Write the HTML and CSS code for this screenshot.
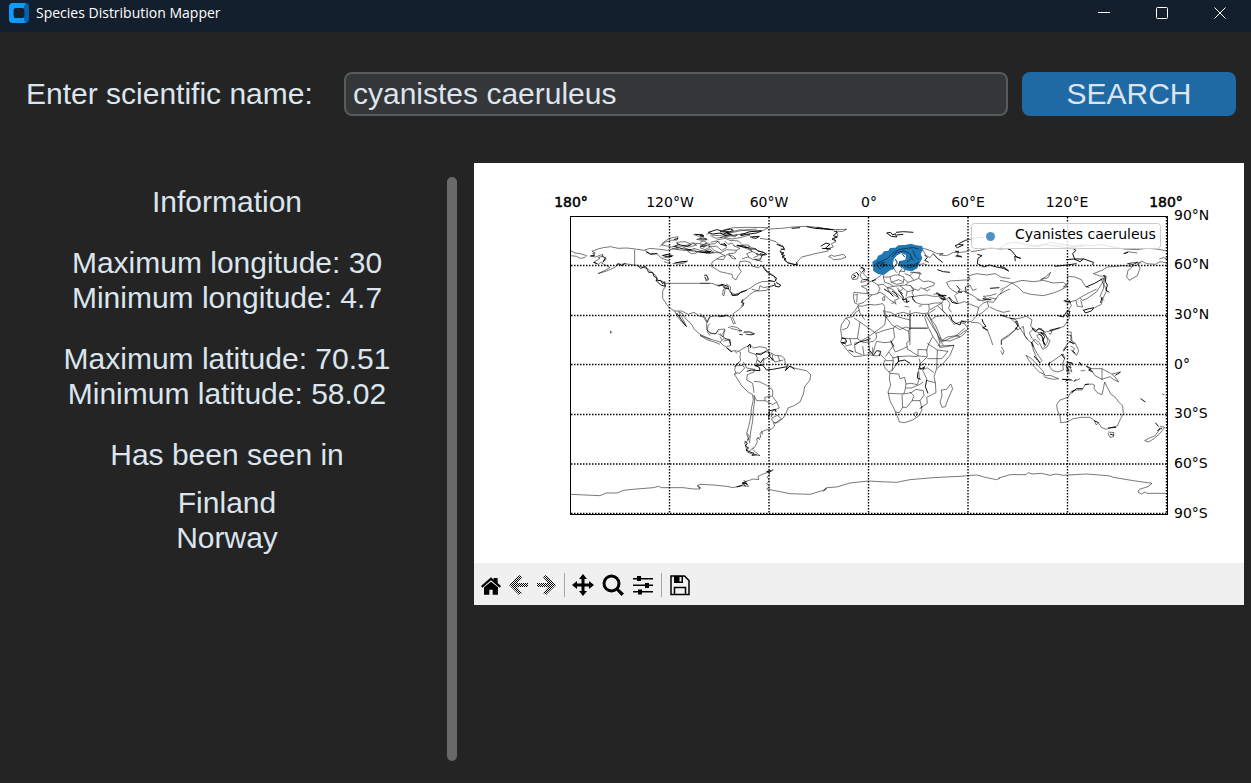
FILE: index.html
```html
<!DOCTYPE html>
<html lang="en">
<head>
  <meta charset="UTF-8" />
  <meta name="viewport" content="width=device-width, initial-scale=1.0" />
  <title>Species Distribution Mapper</title>
  <link rel="stylesheet" href="styles.css">
</head>
<body>
  <header class="titlebar">
    <svg class="app-icon" viewBox="0 0 60 60" aria-hidden="true">
      <rect width="60" height="60" rx="12" fill="#0062b1" />
      <path d="M12 0H50L45 10V50L50 60H12Q0 60 0 48V12Q0 0 12 0Z" fill="#0a9bfb" />
      <rect x="14" y="15" width="32" height="30" rx="6" fill="#141f2d" />
    </svg>
    <span class="app-title">Species Distribution Mapper</span>
    <div class="window-buttons">
      <button type="button" aria-label="Minimize"><svg viewBox="0 0 12 12"><path d="M0 5.5H12" /></svg></button>
      <button type="button" aria-label="Maximize"><svg viewBox="0 0 12 12"><rect x=".5" y=".5" width="11" height="11" rx="1" /></svg></button>
      <button type="button" aria-label="Close"><svg viewBox="0 0 12 12"><path d="M.5 .5L11.5 11.5M11.5 .5L.5 11.5" /></svg></button>
    </div>
  </header>

  <form class="search">
    <label for="species">Enter scientific name:</label>
    <input type="text" id="species" value="cyanistes caeruleus" spellcheck="false" autocomplete="off" />
    <button type="button">SEARCH</button>
  </form>

  <main class="content">
    <section class="info">
      <h2>Information</h2>
      <p>Maximum longitude: 30<br>Minimum longitude: 4.7</p>
      <p>Maximum latitude: 70.51<br>Minimum latitude: 58.02</p>
      <h2>Has been seen in</h2>
      <ul>
        <li>Finland</li>
        <li>Norway</li>
      </ul>
    </section>
    <div class="scrollbar"></div>

    <section class="figure">
      <svg class="map" viewBox="474 163 770 400" role="img" aria-label="Distribution map">
        <!-- coastlines and borders, one group per region -->
        <g class="land">
          <!-- Alaska and western Canada -->
          <g transform="translate(550 185) scale(.33333)">
            <path d="M62 197L75 204 90 206 110 212 104 218 90 220 80 214 62 212" />
            <path d="M121 213L135 210 128 206 136 204 126 199 144 192 160 188 181 185 205 190 230 189 256 192 282 196 300 190 330 193 352 196 370 192 400 196 480 202" />
            <path d="M121 213L136 216 158 208 159 214 145 217 150 220 130 232 145 238 152 232 165 240 180 247 165 256 144 266 170 258 195 247 200 240 225 236 250 240 262 241 280 247 295 252 305 262 318 272 322 285 340 290 346 305 338 318 338 340 350 358 358 368 374 378 382 394 396 412 410 425 400 405 386 380 398 386 406 400 425 418 432 432 450 448 480 462" />
            <path d="M168 215L158 232 170 222M254 194V240M346 295H480M374 378L395 378 415 388 432 382 450 394 465 396 472 412 480 395M480 415L474 422 472 440 480 452" />
            <path d="M285 196L300 206 320 205 332 218 358 228 360 236 342 230M335 212L355 208 370 212 355 218 340 216M368 236L390 232 413 228 400 235 380 238" />
            <path d="M330 185L340 172 358 160 384 155 382 165 362 166 345 172 336 180 365 186 385 180 380 172 405 170 425 178 400 182 418 186 440 180 425 174 450 176 480 184M365 190L385 192 375 182 395 184 420 196 432 190 450 196 480 200M420 204L412 197 434 195 440 204 425 206Z" />
            <path d="M430 150L450 148 462 152 445 154 432 147M440 163L460 158 472 164 455 166ZM465 176L480 178M470 148L480 144M463 272L470 270 475 282 470 284 463 276" />
            <path class="dense" d="M200 238L208 236 214 242 226 235M262 241L272 250 286 244 292 254 296 262 308 262 312 274 322 280 318 288 332 286 338 296 344 290 346 304 332 300 322 290M288 200L302 208 322 206M380 384L394 404 408 424" />
            <path class="dense" d="M338 212L352 208 366 214 344 214M374 234L396 230 410 230M372 164L384 160M370 184L386 188 400 192 424 194M436 148L458 150M448 162L470 162M122 213L134 212M156 212L166 220 160 230M132 232L142 236M440 200L470 204 480 202M380 176L392 180 410 184 422 180" />
            <path d="M181 438L185 441 182 445Z" />
          </g>
          <!-- Eastern Canada, Greenland, Caribbean -->
          <g transform="translate(700 185) scale(.33333)">
            <path class="dense" d="M25 142L50 134 66 138 92 132 100 136 80 144 94 148 75 152 62 144 38 147 25 142M120 150L150 140 185 138 170 144 140 148 122 152M150 156L178 154 168 160 155 158M110 182L130 182 150 192 168 192 172 197 190 202 200 208" />
            <path d="M50 165L75 160 90 166 115 168 128 180 144 180 155 188 168 192 172 197 190 202 200 208 184 212 170 206 150 196 130 186 110 182" />
            <path d="M70 135L100 128 150 127 205 128 190 136 150 138 120 134 90 142M60 158L85 150 105 156 112 148 75 156M0 149L10 152 0 158M0 172L12 168 22 174 8 180 0 188 15 194 30 186 25 178 45 176 52 170 62 178 72 176 80 188 65 196 50 184 30 184 42 196 60 204 80 194 110 196 120 190 100 182M14 200L28 192 42 202 20 204Z" />
            <path d="M30 150L58 152 84 146 104 152 126 146 150 150 120 158 96 162 70 156 48 160 34 154M60 146L82 142 100 142 118 138 140 134 170 132M0 180L20 182 10 188M32 172L48 168 60 172M74 168L84 178 96 174 104 184" />
            <path class="dense" d="M60 140L86 140 70 148M62 178L80 182 72 174M0 152L12 154M0 184L14 184M16 198L34 200M112 180L134 188 150 186M180 206L196 210" />
            <path d="M0 200L30 205 55 202 75 212 60 216 50 222 70 224 80 208 100 214 108 222 95 220 86 206 105 204 110 196M50 222L36 232 34 244 48 252 60 260 82 265 96 268 98 278 108 285 114 272 124 260 116 248 120 230 136 228 150 232 158 244 176 248 186 240 196 252 205 262 215 268 224 276 228 288" />
            <path d="M126 222L146 215 140 206 156 200 150 188M160 218L175 212 168 206 186 210 182 224 170 228 164 222 186 230M144 216L160 224 180 222 190 208" />
            <path class="dense" d="M188 244L198 258 206 264 214 270 220 272 230 280 224 290 206 286M228 292L242 300 238 306 226 304 224 294" />
            <path d="M0 295H35L50 300 70 302 84 310 92 322 104 328 125 322 150 310 170 296 186 290 215 288M50 302L66 300 76 310 72 332 68 330 70 312M78 296L92 306 90 320M92 330L112 328 130 318M155 312L175 318 200 316 206 308 224 300 206 305 190 308 180 302 176 316 162 320 150 328 140 338 128 346" />
            <path class="dense" d="M56 304L66 298 84 304 86 312 70 308M92 320L98 332 114 330 122 322 140 316M128 344L124 352 132 356 124 364M55 392L66 394 80 390" />
            <path d="M128 344L130 362 116 374 100 386 98 398 106 415 100 416 92 396 80 392 60 395 46 392 28 396 20 414 20 434 32 446 48 446 54 434 74 432 70 456 88 468 92 480M0 385L12 398 20 412M0 450L20 464 40 470 60 478M54 446L70 456 60 446M84 428L96 424 112 428 126 438 108 434 92 430M118 448L128 448M132 440L148 440 164 446 154 450 136 447M12 270L20 272 26 284 18 288 16 276" />
            <path d="M208 132L245 130 280 126 320 124 360 128 390 134 440 133 426 140 408 138 414 152 402 160 408 170 394 176 400 186 380 192 385 198 364 202 345 206 330 210 305 216 294 228 286 240 274 236 262 232 256 224 246 208 240 198 252 190 248 182 236 178 228 170 208 164 180 160" />
            <path class="dense" d="M275 130L300 128M320 125L345 130 400 134 350 128M402 138L412 142 400 152 412 156 396 162 408 168M362 184L378 174 390 178 376 190 392 192 366 190M240 200L252 204 244 208 254 212 246 216 258 222 252 224 264 234 292 240 290 232M230 178L250 186 254 194 242 192" />
            <path d="M386 215L394 210 402 214 430 208 438 216 424 222 400 224 394 218 386 215" />
          </g>
          <!-- Europe, Middle East and western Asia -->
          <g transform="translate(850 185) scale(.33333)">
            <path class="dense" d="M110 144L122 142 128 150 136 146 140 156 124 154 110 144M138 142L160 140 190 142M140 150L160 148M315 182L326 178 340 180 322 188ZM326 176L346 166 356 164" />
            <path d="M356 164L378 158 400 157M30 252L38 248 44 258 40 266 50 276 56 284 44 290 32 292 38 282 30 274 34 264 28 256M8 268L20 262 26 270 22 282 8 284 4 276ZM34 304L52 300 54 292 66 288 80 280 92 272 96 262 102 266 100 276 120 276 134 270 146 270 150 258 164 260 162 250 180 250" />
            <path class="dense" d="M32 246L44 252 36 262M8 280L18 274 10 270M20 262L26 270M40 284L54 284M66 288L78 284M102 312L118 322 130 334M144 316L158 326M92 262L98 270" />
            <path d="M34 304L50 312 52 326 30 324 12 322 10 334 14 354 24 358 42 352 54 340 66 330 82 326 90 322 104 330 118 344 132 352 138 358 134 346 148 340 128 326 116 318 112 308 126 312 144 328 156 338 162 350 172 352 166 340 176 336 192 334 186 324 192 312" />
            <path d="M98 338L104 334 104 346 98 346ZM124 356L134 352M164 364L178 366M206 364L216 362M14 330L22 328 20 352M52 326L66 330M66 288L84 300 90 312 82 326M84 300L100 298 112 308M100 276L104 292 118 296 130 304 112 308M120 276L124 292 140 298 160 294 162 276 146 270M124 292L146 284 158 290M130 304L150 302 160 310 152 318 140 308M150 302L168 300 174 292 162 282M160 310L172 320 168 334M168 300L182 302 190 316 172 320M174 292L192 286 180 272 164 266M192 286L206 280 210 266 190 262 180 272M180 262L210 262 214 270M206 280L220 290 236 288 254 294 250 302 236 306 222 312 212 308 206 316 192 312 182 302M222 312L232 318 240 312" />
            <path d="M186 336L206 332 230 330 250 334 270 334 282 342 276 354 254 354 236 358 214 358 196 352 188 342M250 328L262 326 280 334 290 342M260 322L274 330 290 332M236 358L238 372 234 384 220 386 196 382 180 388 160 382 142 386 136 390 122 382 104 380 104 364 98 356 76 360 56 358 36 364 24 362 16 376 0 392" />
            <path class="dense" d="M150 322L160 336 158 344 170 342 170 352 178 348M126 318L138 326 144 336M186 334L190 344 196 350M258 324L272 332 288 332M268 338L286 344" />
            <path d="M180 388V480M180 430H232M104 380L108 396 126 420 150 434 166 426 180 430M108 396L104 420 60 452 30 470M24 362L30 384 44 404M232 386L240 400 252 426 262 446 272 470 280 480M234 384L244 404 256 420 268 448 276 466 300 468 330 456 344 446 354 430 344 416 328 412 312 418 302 404 292 390 278 378 276 356M240 374L262 362 276 354M238 384L256 372M262 362L286 384M244 404L258 394 280 392M290 342L300 356 296 370 304 382M276 466L292 456 318 452 330 456M318 452L344 430" />
            <path class="dense" d="M302 392L306 406 316 414 330 420 334 408 348 412M264 330L282 336 286 344 274 342" />
            <path d="M292 342L298 336 310 350 324 356 320 344 314 332 322 324 308 316 296 306 290 292 300 288 330 286 360 284 356 272 380 266 410 270 436 266 456 278 480 280M322 324L340 318 350 322 346 306 360 300 368 316 380 312M324 356L344 350 366 360 386 368 400 354 412 350 430 352 446 330 466 318 480 312M346 306V322L366 330 390 346M386 368L380 392 364 410 334 408M412 350L416 366 396 384 380 392M364 412L388 414 402 428 414 440 424 466 428 480M380 344L400 348 420 338 440 342M420 366L440 376 460 382 480 378M396 346L410 340 400 334 420 332 440 326" />
            <path class="dense" d="M396 402L400 414 408 424 398 428 414 436M320 302L330 314 324 320 336 322M398 340L410 344 424 344M420 310L448 308M296 336L306 352 322 356" />
            <path d="M204 192L220 190 240 196 262 206 280 206 268 210 290 212 310 202 330 202 350 200 356 192 364 200 390 196 420 188 450 192 480 190M220 196L226 210 240 218 250 206M316 200L326 198 322 212 336 216 316 214" />
            <path class="dense" d="M224 210L232 218 224 226 236 232M250 206L262 220 278 232M262 254L280 260 300 262M382 208L396 212 384 220 382 236 402 246 418 240 440 246 460 250 476 258M316 198L326 202M318 212L334 214" />
            <path d="M150 240L156 250 150 260M128 244L136 258 142 264M204 240L220 236 232 240" />
          </g>
          <!-- East Asia and Siberia -->
          <g transform="translate(1000 185) scale(.33333)">
            <path d="M0 190L20 176 45 172 70 176 90 182 120 184 150 172 180 178 220 184 240 180 280 182 300 178 330 184 352 188 372 192 410 194 440 190 470 192 502 198M100 184L130 178 200 188 250 184M370 206L384 200 412 204M478 222L490 218 502 222M502 234L480 230 466 238 440 236 424 228 412 240 394 244 370 242 346 244 322 246 306 256 280 266 304 274 314 272 308 292 290 320 262 340 248 346 240 340" />
            <path class="dense" d="M20 190L34 196 50 216 62 220 44 214 46 228M218 190L228 196 218 206 224 222 252 222 280 232 278 240M198 224L222 222 240 230 250 222M164 244L200 240 230 236M372 206L384 202M258 306L282 296 310 280M310 272L318 274 316 290 322 300 318 316 328 322M250 376L264 372 282 368 274 378 256 384 250 374M175 392L190 396 200 380 210 378 206 392M0 244L14 248 26 258" />
            <path d="M412 230L420 250 412 272 388 286 380 276 384 256 398 244M384 236L400 232 424 234M122 284L136 276 152 262 144 278ZM0 286L20 290 36 294 66 286 100 290 130 286 160 294 190 292 202 302 190 306 204 294 202 274 224 276 244 284 256 304 268 308M36 294L54 306 70 322 92 328 130 332 160 324 176 318 202 304M0 328L12 310 36 294M0 316L10 308" />
            <path d="M302 280L320 316 308 342 304 358 284 368M314 276L310 312 300 334 312 346M190 348L204 344 212 350 228 346 232 364 248 366 242 346M228 346L240 338 258 328 290 312M208 346L214 362 202 380 208 400 192 424 160 436 140 440 124 450 134 480M192 346L212 352 200 356" />
            <path d="M0 390L24 398 46 402 66 398 78 394 96 404 92 424 100 432 88 444 96 460 110 476 116 480M46 402L60 432 70 424 74 452 82 462M4 480V464L26 450 50 430M30 398L44 412 52 408 56 424M96 428L110 436 124 430 132 442 110 452 120 466M148 436L156 438 152 448 146 444M202 440L214 442 212 464 226 476" />
            <path class="dense" d="M46 410L54 424 46 430 56 434M96 430L106 440 116 430 134 440M116 446L128 456 132 478M0 390L20 394M30 400L44 402M382 236L400 238 412 232M194 350L210 350M150 436L180 428M306 336L302 354" />
          </g>
          <!-- South and Central America -->
          <g transform="translate(700 330) scale(.33333)">
            <path d="M0 17L20 24 40 30 60 36 70 46 80 52 92 64 104 62 116 64 122 68 120 80 122 92 108 104 104 118 108 132 102 132 112 146 124 166 144 186 158 194 160 210 154 236 152 262 146 290 140 310 146 330 134 338 138 352 142 366 160 374 180 377 166 366 158 358 166 348 172 336 170 326 182 322 180 310 196 300 214 298 224 288 220 278 232 278 250 264 258 250 264 234 280 228 300 216 310 192 314 170 330 150 332 134 320 122 290 116 270 110 256 104 254 86 244 78 226 76 206 66 198 54 180 50 160 54 150 44 140 50 128 56 116 64" />
            <path d="M60 36L72 26 88 28 92 46 80 50M66 30L60 20M92 46L90 28 70 34M22 0L30 8 46 12 56 2M76 0L66 14M110 108L128 106 134 114 120 130 108 128M130 96L140 114 164 118 162 126 142 134 140 150 158 160 162 188M162 154L180 156 200 166 218 180 218 198 194 202 196 212 170 212 162 196M146 46L146 66 168 74 172 84 168 102 188 104 192 88 204 82 216 70M168 74L196 66 206 66M218 84L224 96 250 90M234 78L240 94M218 74L216 92M196 212L218 224 230 216 218 200M230 216L238 234 216 244 214 262M216 264L232 256 244 266 226 280 216 272ZM162 196L164 212 160 240 158 272 152 306 148 340M146 366L160 352" />
            <path class="dense" d="M142 50L150 42 152 54M168 70L182 74 200 62M172 90L182 98 192 84M104 110L116 98M140 124L154 120 180 122 178 112 164 106 188 106 200 120 218 118 240 114 262 110 256 122 270 108 284 118M134 334L142 340 136 348 146 354 138 360 150 366 162 370 156 376 170 374M210 242L226 238 228 246M80 54L96 66M206 66L210 80 220 92M208 240L206 268" />
            <path d="M116 4L124 2M118 13L128 15M130 8L148 6 162 13 140 14M142 310L148 320 142 330M184 302L188 314M172 322L180 330M104 64L112 70" />
          </g>
          <!-- Africa -->
          <g transform="translate(830 310) scale(.33333)">
            <path d="M88 0L76 8 68 20 48 24 34 44 32 60 36 84 32 96 46 114 58 128 72 140 94 138 116 134 140 138 152 134 166 148 160 162 166 176 180 188 178 206 182 226 174 246 180 272 194 300 204 324 208 336 224 338 248 330 266 318 276 300 274 292 292 280 290 262 318 248 316 218 312 200 320 176 340 160 360 136 372 106 350 110 330 112 322 98 308 78 294 50 284 22 288 12" />
            <path d="M160 0L166 22 186 16 240 30M240 0V54H294M240 54L236 64 238 92 230 98 232 118 244 124 264 138 290 140M236 64L200 46 190 54 160 62 138 70 140 84 130 94 118 96 100 98 88 90 82 86 90 36 72 24M90 36L138 70M48 24L60 36 52 54 36 60M36 84L60 86 82 86M190 54L194 82 184 96 162 98 140 94 136 104 130 128M184 96L188 110 176 126 166 140M188 110L196 126 220 116 232 110M176 126L190 144 204 140 236 138 262 140M166 152L190 152 188 142M190 152L186 182 176 186M186 182L206 152 204 140M166 164H178M180 190L206 192 210 206 224 202 228 222 224 246 220 252 174 250M228 222L244 220 262 224 268 206 266 180 272 160 292 140 290 120 296 102 308 80M264 138L264 118 292 120M292 100L322 120 354 124 336 146 292 146M322 120L320 176M290 172L312 188M228 234L244 234 268 224 280 216M280 184L292 212 316 218M220 252L244 248 258 238 280 242 282 256 270 272 246 272 230 292 218 292 216 254M218 292L208 308 196 306M246 272L252 258 240 246M270 272L276 294M250 312L260 306 264 312 256 320ZM74 108L76 126 96 134M98 108L102 136M116 96L120 132M128 112L128 132M60 86L64 104 46 108M72 100L88 96" />
            <path class="dense" d="M34 84L46 86 50 96 34 98 48 102M56 120L70 126M120 122L130 136 140 122 152 124 148 138M72 106L88 96 104 92 122 86M182 92L192 110M204 138L206 154 196 166M204 154L224 150 240 160M268 168L272 178 284 170 278 182M264 186L262 204 272 208M290 210L286 230 294 250M276 290L270 296" />
            <path d="M362 222L368 236 356 262 346 290 336 292 330 276 336 258 334 240 350 238 362 222M264 176H290M268 146L272 166 286 160M290 20L304 44 322 72 330 100 326 108 372 106M328 80L336 96 362 84 390 74 408 60" />
          </g>
          <!-- South-east Asia and Oceania -->
          <g transform="translate(1000 310) scale(.33333)">
            <path d="M4 104V92L26 78 50 56M4 110L12 124 8 134 2 122M60 54L74 76 82 88 94 98 100 120 110 144 120 158 126 152 116 138 104 118 96 96 106 88 118 98 128 118 142 110 150 92 136 76 122 66M96 54L110 66 136 72 144 92 132 112M78 136L92 144 108 160 128 182 134 194 118 186 104 172 86 150 78 136M130 198L150 196 176 206 160 208 134 202M146 160L160 152 180 138 190 132 194 146 188 160 190 180 174 186 158 182 150 172Z" />
            <path d="M202 160L216 158 210 170 216 186 204 176 208 192 200 184 202 160M188 208L210 208 218 212M222 214L240 206M204 76L214 76 216 92 208 96 226 100 236 122 230 136 218 126 224 116 212 108M206 96L190 120M240 158L244 168M242 182L256 182M260 170L276 182 284 196 306 208 330 200 340 208 356 216 344 200 334 192 346 190 360 186M276 176L306 176 332 190M306 176V210" />
            <path class="dense" d="M102 138L112 150M190 124L200 110M200 156L218 160M204 170L214 172M186 208L214 210M222 214L228 208M238 156L244 166M258 168L274 176 266 180 278 186M346 196L362 186M122 66L134 80 128 92 136 106M184 132L194 146M216 246L230 236 248 236M324 354L348 352M282 332L296 338M466 338L476 350M422 266L436 276M472 362L486 354" />
            <path class="dense" d="M208 94L222 102M214 120L226 130M94 96L100 110M112 148L120 160M150 156L146 166M198 166L206 182M214 250L224 240M196 214L206 208M254 224L266 222M330 372L342 376" />
            <path d="M314 216L324 236 332 252 346 262 356 276 368 288 370 310 360 330 352 348 336 352 318 358 304 352 296 340 288 344 284 332 270 322 244 322 220 326 200 336 182 338 180 318 172 300 170 284 180 270 204 262 214 244 230 240 246 240 256 224 276 222 284 226 282 236 292 248 306 254 310 236 314 216M324 366L342 368 340 380 330 382 324 370M480 348L494 352 480 370 462 386 446 396 434 392 448 384 464 378 474 366 480 352M486 252L494 254" />
          </g>
          <!-- Antarctica -->
          <g transform="translate(560 455) scale(.33333)">
            <path d="M32 118L120 122 138 114 172 114 190 106 230 102 280 98 296 94 304 98 370 98 400 102 420 102 412 92 420 88 460 90 500 94 520 98 548 90 556 80 580 72 596 74 594 64 612 56 640 46M544 92L566 94 556 84 546 86 560 78M640 44L620 50 630 56 622 66 628 78 620 86 628 94 620 102 640 106 690 116 750 118 790 106 800 98 830 96 870 84 925 78 960 80 1010 82 1050 74 1120 68 1200 64 1250 60 1280 68 1310 74 1320 70" />
            <path class="dense" d="M414 92L422 100M530 96L546 92M552 76L562 88 548 82 556 94M620 50L634 48M790 108L800 100" />
          </g>
          <g transform="translate(1000 310) scale(.33333)">
            <path d="M-4 504L30 494 78 494 84 488 96 492 124 490 150 496 168 492 190 496 260 492 310 496 330 498 340 502 400 512 456 520 444 530 418 538 414 546 424 552 436 546 440 550H502" />
          </g>
        </g>

        <!-- observations -->
        <g transform="translate(850 185) scale(.33333)">
          <path class="points" d="M68 240L67 230 80 222 84 212 95 208 102 199 115 197 120 189 136 188 145 181 165 180 182 176 198 181 216 183 220 194 212 206 217 220 208 236 202 250 186 259 166 256 158 248 146 242 150 228 166 224 168 210 154 204 140 212 132 222 128 238 132 250 118 257 105 268 85 268 70 258Z" />
          <path class="points-land" d="M92 252L82 244 80 234 96 228 110 222 126 206 146 194 170 190 190 188 206 192M84 236L104 232 92 240 110 238 96 248M126 216L140 202 164 198 180 206 186 220 170 232M188 196L196 214 206 224M160 240L176 248 196 244 206 232 190 240 174 240M180 216L192 226" />
          <path class="points-land" d="M136 222L142 234 134 244 126 254M150 228L146 240M156 206L164 216" />
        </g>

        <g class="grid">
          <path d="M669.5 217V514M769 217V514M868.5 217V514M968 217V514M1067.5 217V514M1166.5 217V514" />
          <path d="M571 265.5H1167M571 315.5H1167M571 364.5H1167M571 414.5H1167M571 464H1167M571 513.5H1167" />
        </g>
        <rect class="frame" x="570.5" y="216.5" width="597" height="298" />

        <g class="ticks ticks-top">
          <text class="strong" x="571" y="207">180°</text>
          <text x="670" y="207">120°W</text>
          <text x="769" y="207">60°W</text>
          <text x="869" y="207">0°</text>
          <text x="968" y="207">60°E</text>
          <text x="1067" y="207">120°E</text>
          <text class="strong" x="1166" y="207">180°</text>
        </g>
        <g class="ticks">
          <text x="1174" y="220">90°N</text>
          <text x="1174" y="269">60°N</text>
          <text x="1174" y="319">30°N</text>
          <text x="1174" y="369">0°</text>
          <text x="1174" y="418">30°S</text>
          <text x="1174" y="468">60°S</text>
          <text x="1174" y="518">90°S</text>
        </g>

        <rect class="legend" x="971.5" y="223.5" width="189" height="25" rx="3" />
        <circle class="legend-dot" cx="990.5" cy="236.5" r="4.5" />
        <text class="ticks" x="1015" y="239">Cyanistes caeruleus</text>
      </svg>

      <div class="toolbar">
        <button type="button" class="nav" aria-label="Home">
          <svg viewBox="24 53 72 72"><path d="M30 92L60 66 68 73V68H80V83L90 92 86 97 60 75 34 97Z" /><path d="M39 96L60 79 81 96V118H65V103H55V118H39Z" /></svg>
        </button>
        <button type="button" class="nav" aria-label="Back">
          <svg viewBox="0 0 24 24">
            <defs><pattern id="dither" width="2" height="2" patternUnits="userSpaceOnUse"><path d="M0 0H1V1H0ZM1 1H2V2H1Z" shape-rendering="crispEdges" /></pattern></defs>
            <path fill="url(#dither)" d="M2 12L12 2 15 4 10 10H21V14H10L15 20 12 22Z" />
          </svg>
        </button>
        <button type="button" class="nav" aria-label="Forward">
          <svg viewBox="0 0 24 24"><path fill="url(#dither)" d="M21 12L11 2 8 4 13 10H2V14H13L8 20 11 22Z" /></svg>
        </button>
        <span class="separator"></span>
        <button type="button" aria-label="Pan">
          <svg viewBox="0 0 24 24"><path d="M12 1L16 6H13.500V10.500H18V8L23 12 18 16V13.500H13.500V18H16L12 23 8 18H10.500V13.500H6V16L1 12 6 8V10.500H10.500V6H8Z" /></svg>
        </button>
        <button type="button" aria-label="Zoom">
          <svg viewBox="0 0 24 24"><circle cx="10.500" cy="10.500" r="7.500" fill="none" stroke="#000" stroke-width="3" /><path d="M15 17L17 15 23 20.500 20.500 23Z" /></svg>
        </button>
        <button type="button" aria-label="Configure subplots">
          <svg viewBox="0 0 24 24"><path d="M2 5H22V6.500H2ZM2 11.500H22V13H2ZM2 18H22V19.500H2ZM6 3H10V8H6ZM14 10H18V15H14ZM7 16.500H11V21.500H7Z" /></svg>
        </button>
        <span class="separator"></span>
        <button type="button" aria-label="Save">
          <svg viewBox="0 0 24 24"><path d="M3 3H16.500L21 7.500V21.500H3ZM6.500 21V14.500H17.500V21" fill="none" stroke="#000" stroke-width="1.500" /><path d="M6 3H15V10H6ZM11.500 4V8.500H13.500V4Z" fill-rule="evenodd" /></svg>
        </button>
      </div>
    </section>
  </main>
</body>
</html>
```
FILE: styles.css
```css
* { margin: 0; padding: 0; box-sizing: border-box; }
body {
  display: flex;
  flex-direction: column;
  min-height: 100vh;
  background: #242424;
  color: #dce4ee;
  font-family: "Liberation Sans", Arial, sans-serif;
  font-size: 30px;
  line-height: 35px;
}
button { border: none; background: none; color: inherit; font: inherit; }

.titlebar {
  display: flex;
  align-items: center;
  height: 32px;
  padding: 0 2px 6px 9px;
  background: #141f2d;
  color: #fff;
}
.app-icon { width: 20px; height: 20px; }
.app-title {
  margin-left: 7px;
  font-family: "Open Sans", "Segoe UI", sans-serif;
  font-size: 14px;
  line-height: 20px;
}
.window-buttons { display: flex; margin-left: auto; }
.window-buttons button {
  display: flex;
  align-items: center;
  justify-content: center;
  width: 58px;
  height: 26px;
}
.window-buttons svg { width: 12px; height: 12px; fill: none; stroke: #fff; }

.search {
  display: flex;
  align-items: center;
  padding: 40px 15px 0 26px;
}
.search label { width: 318px; padding-bottom: 2px; }
.search input {
  flex: 1;
  min-width: 0;
  height: 44px;
  padding: 0 7px;
  border: 2px solid #565b5e;
  border-radius: 8px;
  background: #343638;
  color: #dce4ee;
  font: inherit;
  outline: none;
}
.search button {
  width: 214px;
  height: 44px;
  margin-left: 14px;
  padding-bottom: 2px;
  border-radius: 8px;
  background: #1f6aa5;
}

.content {
  display: flex;
  flex: 1;
  align-items: flex-start;
  padding: 47px 7px 22px;
}
.info {
  display: flex;
  flex-direction: column;
  gap: 26px;
  width: 440px;
  padding-top: 21px;
  text-align: center;
}
.info h2 { font-size: 30px; font-weight: normal; }
.info ul { margin-top: -13px; list-style: none; }
.scrollbar {
  align-self: stretch;
  width: 10px;
  margin: 14px 17px 0 0;
  border-radius: 5px;
  background: #696969;
}

.figure { flex: 1; background: #fff; }
.map { display: block; width: 100%; }
.land path { fill: none; stroke: #000; stroke-width: 1.6; }
.land .dense { stroke-width: 2.8; }
.points { fill: #1f77b4; }
.points-land { fill: none; stroke: #0c3c5e; stroke-width: 3; }
.grid path { fill: none; stroke: #000; stroke-width: 1.4; stroke-dasharray: 1.5 1.5; }
.frame { fill: none; stroke: #000; }
.ticks { font-family: "DejaVu Sans", sans-serif; font-size: 14px; }
.ticks-top { text-anchor: middle; }
.strong { stroke: #000; stroke-width: .5; }
.legend { fill: #fff; fill-opacity: .8; stroke: #ccc; }
.legend-dot { fill: #1f77b4; fill-opacity: .8; }

.toolbar {
  display: flex;
  align-items: center;
  height: 42px;
  padding: 1px 0 0 3px;
  background: #f0f0f0;
}
.toolbar button {
  display: flex;
  align-items: center;
  justify-content: center;
  width: 30px;
  height: 30px;
}
.toolbar .nav { width: 28px; }
.toolbar svg { width: 24px; height: 24px; }
.separator { width: 1px; height: 24px; margin: 0 3px; background: #a5a5a5; }
```
